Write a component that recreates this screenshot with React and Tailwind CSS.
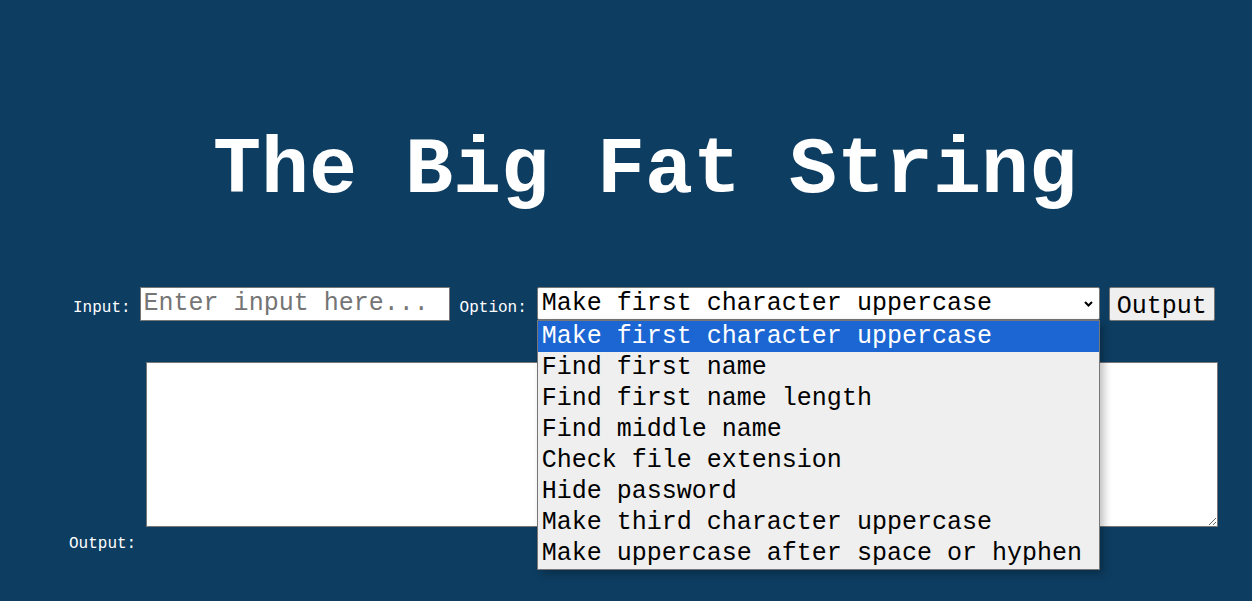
import React from 'react';

const options = [
  'Make first character uppercase',
  'Find first name',
  'Find first name length',
  'Find middle name',
  'Check file extension',
  'Hide password',
  'Make third character uppercase',
  'Make uppercase after space or hyphen',
];

const mono = { fontFamily: '"Liberation Mono", "Courier New", monospace' };

const App = () => {
  return (
    <div className="min-h-screen bg-[#0d3d61] text-white" style={mono}>
      <h1 className="pl-[38px] pt-[126px] text-center text-[80px] font-bold leading-[1.133]">
        The Big Fat String
      </h1>

      <div className="mt-[70px] flex items-center pl-[73px] text-[16px]">
        <label className="mr-[9px] mt-[8px]">Input:</label>
        <input
          className="h-[34px] w-[310px] border border-[#767676] bg-white px-[3px] text-[25px] text-black outline-none placeholder:text-[#757575]"
          placeholder="Enter input here..."
          style={mono}
        />
        <label className="ml-[10px] mr-[10px] mt-[8px]">Option:</label>
        <div className="relative">
          <div className="flex h-[33px] w-[563px] items-center justify-between rounded-[2px] border border-[#767676] bg-white pl-[4px] pr-[6px] text-[25px] text-black">
            <span>Make first character uppercase</span>
            <svg width="9" height="6" viewBox="0 0 9 6" className="mt-[1px]">
              <path d="M1 1 L4.5 4.5 L8 1" fill="none" stroke="#000" strokeWidth="2" />
            </svg>
          </div>
          <div className="absolute left-0 top-full z-10 w-[563px] border border-[#767676] bg-[#efefef] text-[25px] text-black shadow-[4px_4px_8px_rgba(0,0,0,0.25)]">
            {options.map((opt, i) => (
              <div
                key={i}
                className={`flex h-[31px] items-center pl-[4px] ${i === 0 ? 'bg-[#1b66d2] text-white' : ''}`}
              >
                {opt}
              </div>
            ))}
          </div>
        </div>
        <button
          className="ml-[9px] h-[34px] w-[106px] rounded-[2px] border border-[#767676] bg-[#efefef] pb-[2px] text-[25px] text-black"
          style={mono}
        >
          Output
        </button>
      </div>

      <div className="mt-[41px] pl-[146px]">
        <textarea
          className="block h-[165px] w-[1072px] resize border border-[#767676] bg-white"
          style={mono}
        />
      </div>
      <div className="mt-[8px] pl-[69px] text-[16px] leading-[18px]">Output:</div>
    </div>
  );
};

export default App;
